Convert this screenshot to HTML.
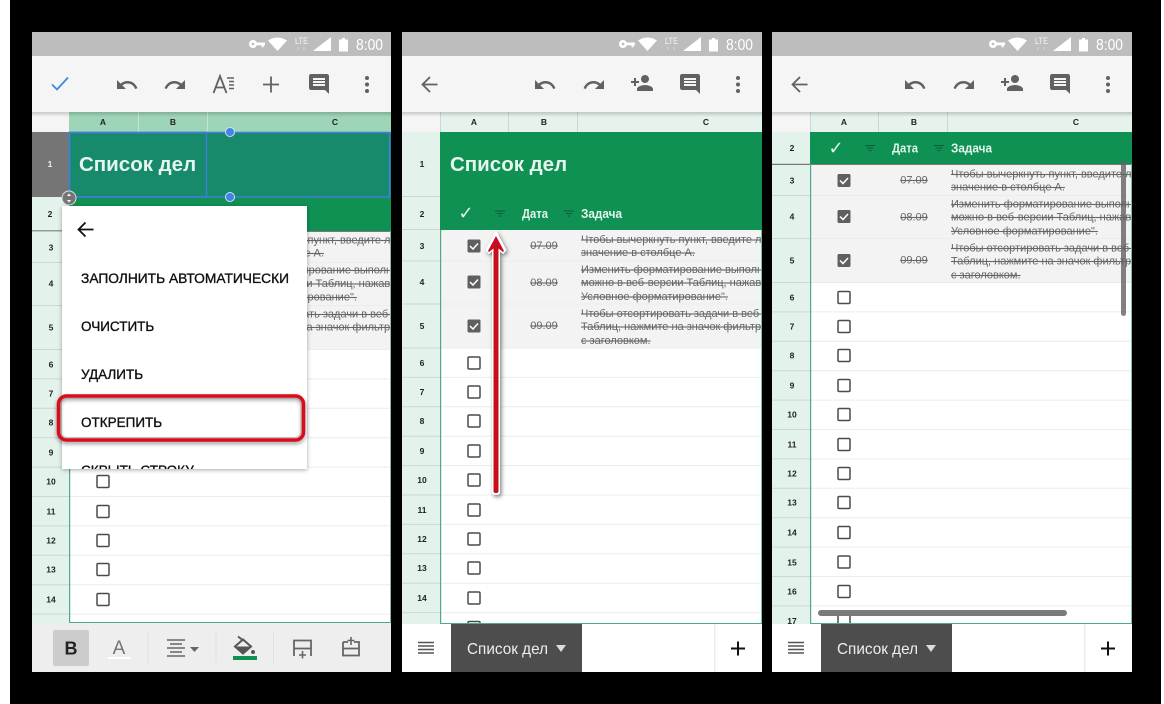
<!DOCTYPE html>
<html lang="ru">
<head>
<meta charset="utf-8">
<title>Список дел</title>
<style>
html,body{margin:0;padding:0;background:#fff;width:1164px;height:704px;overflow:hidden}
svg{display:block;filter:blur(.3px)}
text{font-family:"Liberation Sans","Noto Sans CJK SC",sans-serif}
.n{font-size:8.5px;font-weight:bold;fill:#222;text-anchor:middle}
.c{font-size:8.5px;font-weight:bold;fill:#222;text-anchor:middle}
.t{font-size:11px;fill:#666;text-decoration:line-through}
.d{font-size:11px;fill:#666;text-decoration:line-through;text-anchor:middle}
.h{font-size:12.5px;font-weight:bold;fill:#e4f5ec}
.title{font-size:20.5px;font-weight:bold;fill:#e6f5ee}
.m{font-size:13.5px;fill:#111;stroke:#111;stroke-width:.35}
.time{font-size:15.5px;fill:#fff}
.lte{font-size:9px;fill:#fff;opacity:.85}
.tab{font-size:16px;fill:#eee}
.chk{font-family:"DejaVu Sans",sans-serif;font-size:18px;font-weight:bold;fill:#e6f5ee;text-anchor:middle}
</style>
</head>
<body>
<svg width="1164" height="704" viewBox="0 0 1164 704" xmlns="http://www.w3.org/2000/svg">
<defs>
<clipPath id="pc"><rect x="0" y="32" width="360" height="640"/></clipPath>
<clipPath id="pc1"><rect x="0" y="32" width="359" height="640"/></clipPath>
<clipPath id="menu"><rect x="30" y="206" width="245" height="263"/></clipPath>
<filter id="sh" x="-10%" y="-10%" width="120%" height="120%"><feDropShadow dx="0" dy="1" stdDeviation="2" flood-color="#000" flood-opacity=".35"/></filter>
<filter id="rs" x="-10%" y="-30%" width="120%" height="160%"><feDropShadow dx="0" dy="2" stdDeviation="2" flood-color="#000" flood-opacity=".45"/></filter>
<filter id="as" x="-200%" y="-5%" width="500%" height="110%"><feDropShadow dx="1.500" dy="2" stdDeviation="2" flood-color="#000" flood-opacity=".5"/></filter>
<linearGradient id="tsh" x1="0" y1="0" x2="0" y2="1"><stop offset="0" stop-color="#000" stop-opacity=".18"/><stop offset="1" stop-color="#000" stop-opacity="0"/></linearGradient>
<g id="on"><rect x="-6.500" y="-6.500" width="13" height="13" rx="1.500" fill="#5f5f5f"/><path d="M-4 0l3 3 5-5.500" fill="none" stroke="#fff" stroke-width="1.500"/></g>
<rect id="off" x="-6" y="-6" width="12" height="12" rx="1.200" fill="#fff" stroke="#4a4a4a" stroke-width="1.500"/>
<g id="filt" fill="none" stroke="#0a5c34" stroke-width="1"><path d="M-5-2.500h10M-3.200 0h6.400M-1.300 2.500h2.600"/></g>
<g id="status">
<rect x="0" y="32" width="360" height="24" fill="#bdbdbd"/>
<g fill="#fff">
<circle cx="221" cy="44" r="4"/><circle cx="221" cy="44" r="1.300" fill="#bdbdbd"/><path d="M224 42.500h9v2.800h-1.400v1.900h-2v-1.900h-5.600z"/>
<path d="M236 40.500q9.500-6 19 0l-9.500 10.500z"/>
<path d="M281 51L299 37V51z"/>
<path d="M307 39.500h3v-1.500h3v1.500h3v12h-9z"/>
</g>
<text class="lte" x="263" y="44" textLength="13" lengthAdjust="spacingAndGlyphs">LTE</text>
<path d="M266 47v3M272 47v3" stroke="#fff" stroke-width=".8" opacity=".5"/>
<text class="time" x="324" y="50" textLength="27" lengthAdjust="spacingAndGlyphs">8:00</text>
</g>
<g id="undo"><path fill="#616161" d="M12.500 8c-2.650 0-5.050.99-6.900 2.600L2 7v9h9l-3.620-3.620c1.390-1.160 3.160-1.880 5.120-1.880 3.540 0 6.550 2.310 7.600 5.500l2.370-.78C21.080 11.030 17.150 8 12.500 8z"/></g>
<g id="redo"><path fill="#616161" d="M18.400 10.600C16.550 8.990 14.150 8 11.500 8c-4.650 0-8.580 3.030-9.960 7.220L3.900 16c1.050-3.190 4.050-5.500 7.600-5.500 1.950 0 3.730.72 5.120 1.880L13 16h9V7l-3.600 3.600z"/></g>
<g id="cmt"><path fill="#616161" d="M21.990 4c0-1.100-.89-2-1.990-2H4c-1.100 0-2 .9-2 2v12c0 1.100.9 2 2 2h14l4 4-.01-18zM18 14H6v-2h12v2zm0-3H6V9h12v2zm0-3H6V6h12v2z"/></g>
<g id="dots" fill="#616161"><circle cx="0" cy="-6.500" r="2"/><circle cx="0" cy="0" r="2"/><circle cx="0" cy="6.500" r="2"/></g>
<g id="tools2">
<rect x="0" y="56" width="360" height="56" fill="#f5f5f5"/>
<path d="M35.500 84.500H21M28 77l-7.500 7.500 7.500 7.500" fill="none" stroke="#616161" stroke-width="1.800"/>
<use href="#undo" x="131" y="73"/><use href="#redo" x="180" y="73"/>
<path fill="#616161" transform="translate(228,71)" d="M15 12c2.210 0 4-1.790 4-4s-1.790-4-4-4-4 1.790-4 4 1.790 4 4 4zm-9-2V7H4v3H1v2h3v3h2v-3h3v-2H6zm9 4c-2.670 0-8 1.340-8 4v2h16v-2c0-2.660-5.330-4-8-4z"/>
<use href="#cmt" x="276" y="72"/><use href="#dots" x="336" y="84.500"/>
</g>
<g id="tabbar">
<rect x="0" y="624" width="360" height="48" fill="#fff"/>
<path d="M16 642.500h16M16 646h16M16 649.500h16M16 653h16" stroke="#555" stroke-width="1.500"/>
<rect x="49" y="624" width="131" height="48" fill="#4d4d4d"/>
<text class="tab" x="65" y="654" textLength="81" lengthAdjust="spacingAndGlyphs">Список дел</text>
<path d="M154 645h10l-5 7z" fill="#ddd"/>
<rect x="312" y="624" width="1.500" height="48" fill="#eee"/>
<path d="M336 641.500v14M329 648.500h14" stroke="#111" stroke-width="2"/>
</g>
<g id="grid">
<rect x="0" y="230" width="38" height="480" fill="#e4f2ec"/>
<rect x="38" y="230" width="322" height="480" fill="#fff"/>
<rect x="38" y="230" width="322" height="118" fill="#f3f3f3"/>
<path d="M0 261H360M0 304H360M0 348H360M0 377.400H360M0 406.800H360M0 436.200H360M0 465.600H360M0 495H360M0 524.400H360M0 553.800H360M0 583.200H360M0 612.600H360M0 642H360M0 671.400H360" stroke="#ececec" stroke-width="1"/>
<path d="M0 261H38M0 304H38M0 348H38M0 377.400H38M0 406.800H38M0 436.200H38M0 465.600H38M0 495H38M0 524.400H38M0 553.800H38M0 583.200H38M0 612.600H38M0 642H38M0 671.400H38" stroke="#c9d9d1" stroke-width="1"/>
<use href="#on" x="72" y="246"/><use href="#on" x="72" y="282"/><use href="#on" x="72" y="326"/>
<use href="#off" x="72" y="363"/><use href="#off" x="72" y="392"/><use href="#off" x="72" y="421"/><use href="#off" x="72" y="451"/><use href="#off" x="72" y="480"/><use href="#off" x="72" y="510"/><use href="#off" x="72" y="539"/><use href="#off" x="72" y="568"/><use href="#off" x="72" y="598"/><use href="#off" x="72" y="627.500"/><use href="#off" x="72" y="657"/><use href="#off" x="72" y="686.500"/>
</g>
</defs>

<rect x="10" y="0" width="1151" height="704" fill="#000"/>

<!-- PANEL 1 -->
<g transform="translate(32,0)" clip-path="url(#pc1)">
<g transform="translate(-1,1.500)">
<use href="#grid"/>
<text class="t" x="179" y="242">Чтобы вычеркнуть пункт, введите логическое</text>
<text class="t" x="179" y="255">значение в столбце А.</text>
<text class="t" x="179" y="272">Изменить форматирование выполненных</text>
<text class="t" x="179" y="285.500">можно в веб-версии Таблиц, нажав</text>
<text class="t" x="179" y="299">Условное форматирование".</text>
<text class="t" x="179" y="316">Чтобы отсортировать задачи в веб-версии</text>
<text class="t" x="179" y="329">Таблиц, нажмите на значок фильтра</text>
<text class="t" x="179" y="343">с заголовком.</text>
<text class="n" x="20" y="249">3</text><text class="n" x="20" y="285">4</text><text class="n" x="20" y="329">5</text><text class="n" x="20" y="366">6</text><text class="n" x="20" y="395">7</text><text class="n" x="20" y="424">8</text><text class="n" x="20" y="454">9</text><text class="n" x="20" y="483">10</text><text class="n" x="20" y="513">11</text><text class="n" x="20" y="542">12</text><text class="n" x="20" y="571">13</text><text class="n" x="20" y="601">14</text>
</g>
<rect x="37" y="231" width="1.200" height="392" fill="#4fa98a"/>
<rect x="358" y="231" width="1.200" height="392" fill="#7cc2a8"/>
<rect x="37" y="622" width="322" height="1.200" fill="#4fa98a"/>
<use href="#status"/>
<rect x="0" y="56" width="360" height="56" fill="#f5f5f5"/>
<path d="M20 84.500l5 5 11-12" fill="none" stroke="#4285e0" stroke-width="1.800"/>
<use href="#undo" x="83" y="73"/><use href="#redo" x="131" y="73"/>
<path d="M181.500 93L188 76l6.500 17M184 87.500h8" fill="none" stroke="#616161" stroke-width="1.800"/>
<path d="M195 78h7M197 81.500h5M197 85h5M197 88.500h5" stroke="#616161" stroke-width="1.400"/>
<path d="M231 84.500h16M239 76.500v16" stroke="#616161" stroke-width="1.800"/>
<use href="#cmt" x="275" y="72"/><use href="#dots" x="335" y="84.500"/>
<!-- headers -->
<rect x="0" y="112" width="37" height="20" fill="#f5f5f5"/>
<rect x="37" y="112" width="322" height="20" fill="#9ed5b8"/>
<rect x="106" y="112" width="1" height="20" fill="#c4e5d3"/><rect x="175" y="112" width="1" height="20" fill="#c4e5d3"/>
<text class="c" x="71" y="125">A</text><text class="c" x="141" y="125">B</text><text class="c" x="303" y="125">C</text>
<rect x="0" y="112" width="360" height="5" fill="url(#tsh)"/>
<rect x="0" y="132" width="37" height="65" fill="#757575"/>
<text class="n" x="18" y="167" style="fill:#eee">1</text>
<rect x="0" y="197" width="37" height="34" fill="#e4f2ec"/>
<rect x="0" y="230" width="37" height="1.500" fill="#999"/>
<text class="n" x="18" y="217">2</text>
<rect x="37" y="132" width="322" height="65" fill="#178a6c"/>
<rect x="37" y="197" width="322" height="34" fill="#0f9154"/>
<rect x="37.500" y="132.500" width="320" height="64.500" fill="none" stroke="#3f7fd8" stroke-width="1.500"/>
<rect x="37.500" y="132.500" width="137" height="64.500" fill="none" stroke="#3f7fd8" stroke-width="1.500"/>
<text class="title" x="47" y="171">Список дел</text>
<circle cx="198" cy="132" r="4.500" fill="#4285e0" stroke="#cfe0f5"/>
<circle cx="198" cy="197" r="4.500" fill="#4285e0" stroke="#cfe0f5"/>
<circle cx="37" cy="198" r="7" fill="#757575" stroke="#ddd" stroke-width="1"/>
<path d="M37 193.500l2 2.500h-4zM37 202.500l2-2.500h-4z" fill="#fff"/>
<!-- menu -->
<rect x="30" y="206" width="245" height="263" fill="#fff" filter="url(#sh)"/>
<path d="M61.500 229.500H46.500M53.500 222.500l-7 7 7 7" fill="none" stroke="#111" stroke-width="1.800"/>
<g clip-path="url(#menu)">
<text class="m" x="49" y="283" textLength="208" lengthAdjust="spacingAndGlyphs">ЗАПОЛНИТЬ АВТОМАТИЧЕСКИ</text>
<text class="m" x="49" y="331">ОЧИСТИТЬ</text>
<text class="m" x="49" y="379">УДАЛИТЬ</text>
<text class="m" x="49" y="427">ОТКРЕПИТЬ</text>
<text class="m" x="49" y="475">СКРЫТЬ СТРОКУ</text>
</g>
<rect x="26.500" y="396" width="245" height="44" rx="8" fill="none" stroke="#d8091b" stroke-width="3.500" filter="url(#rs)"/>
<rect x="29" y="398.500" width="240" height="39" rx="6" fill="none" stroke="#999" stroke-width="1" opacity=".6"/>
<!-- bottom bar -->
<rect x="0" y="623" width="359" height="49" fill="#eee"/>
<rect x="21" y="630" width="36" height="36" rx="2" fill="#ccc"/>
<text x="39" y="654.500" text-anchor="middle" style="font-size:18px;font-weight:bold;fill:#222">B</text>
<text x="87" y="654" text-anchor="middle" style="font-size:19px;fill:#757575">A</text>
<rect x="76" y="657" width="23" height="2" fill="#fff"/>
<rect x="115.500" y="632" width="1" height="31" fill="#e0e0e0"/><rect x="183.500" y="632" width="1" height="31" fill="#e0e0e0"/><rect x="241" y="632" width="1" height="31" fill="#e0e0e0"/>
<path d="M135 640h18M138 644h12M135 648h18M138 652h12M135 656h18" stroke="#666" stroke-width="1.600"/>
<path d="M158 647h9l-4.500 5z" fill="#666"/>
<path d="M211 639.500l8 7-8 7-8-7z" fill="none" stroke="#555" stroke-width="2"/>
<path d="M203 646.500h16l-8 7z" fill="#555"/>
<path d="M206 636.500l4 3" stroke="#555" stroke-width="1.800"/>
<circle cx="221" cy="652" r="2" fill="#555"/>
<rect x="201" y="656" width="24" height="4" fill="#0f9154"/>
<path d="M262 656v-15.500h17V656M262 648.500h17" fill="none" stroke="#666" stroke-width="1.800"/>
<path d="M270.500 651v7.500M267 655h7" stroke="#666" stroke-width="1.600"/>
<path d="M311 642v13.500h16V642h-5M316 642h-5M311 648.500h16" fill="none" stroke="#666" stroke-width="1.800"/>
<path d="M319 637v8M315.500 640.500h7" stroke="#666" stroke-width="1.600"/>
</g>

<!-- PANEL 2 -->
<g transform="translate(402,0)" clip-path="url(#pc)">
<use href="#grid"/>
<text class="t" x="179" y="243">Чтобы вычеркнуть пункт, введите логическое</text>
<text class="t" x="179" y="256">значение в столбце А.</text>
<text class="t" x="179" y="273">Изменить форматирование выполненных</text>
<text class="t" x="179" y="286">можно в веб-версии Таблиц, нажав</text>
<text class="t" x="179" y="300">Условное форматирование".</text>
<text class="t" x="179" y="317">Чтобы отсортировать задачи в веб-версии</text>
<text class="t" x="179" y="330">Таблиц, нажмите на значок фильтра</text>
<text class="t" x="179" y="344">с заголовком.</text>
<text class="d" x="142" y="249">07.09</text><text class="d" x="142" y="286">08.09</text><text class="d" x="142" y="329">09.09</text>
<text class="n" x="20" y="249">3</text><text class="n" x="20" y="285">4</text><text class="n" x="20" y="329">5</text><text class="n" x="20" y="366">6</text><text class="n" x="20" y="395">7</text><text class="n" x="20" y="424">8</text><text class="n" x="20" y="454">9</text><text class="n" x="20" y="483">10</text><text class="n" x="20" y="513">11</text><text class="n" x="20" y="542">12</text><text class="n" x="20" y="571">13</text><text class="n" x="20" y="601">14</text>
<rect x="38" y="230" width="1.200" height="394" fill="#4fa98a"/>
<rect x="359" y="230" width="1.200" height="394" fill="#7cc2a8"/>
<rect x="38" y="623" width="322" height="1.200" fill="#4fa98a"/>
<use href="#status"/><use href="#tools2"/>
<rect x="0" y="112" width="360" height="20" fill="#e5f3ec"/>
<rect x="0" y="112" width="38" height="20" fill="#f5f5f5"/>
<rect x="38" y="112" width="1" height="20" fill="#c9d9d1"/><rect x="106" y="112" width="1" height="20" fill="#c9d9d1"/><rect x="175" y="112" width="1" height="20" fill="#c9d9d1"/>
<text class="c" x="72" y="125">A</text><text class="c" x="142" y="125">B</text><text class="c" x="304" y="125">C</text>
<rect x="0" y="112" width="360" height="5" fill="url(#tsh)"/>
<rect x="0" y="132" width="38" height="98" fill="#e4f2ec"/>
<rect x="0" y="196" width="38" height="1" fill="#c9d9d1"/>
<rect x="0" y="229" width="38" height="1" fill="#c9d9d1"/>
<text class="n" x="20" y="167">1</text><text class="n" x="20" y="217">2</text>
<rect x="38" y="132" width="322" height="98" fill="#0f9154"/>
<text class="title" x="48" y="171">Список дел</text>
<text class="chk" x="64" y="219">✓</text>
<use href="#filt" x="98" y="213.500"/>
<text class="h" x="120" y="218" textLength="26" lengthAdjust="spacingAndGlyphs">Дата</text>
<use href="#filt" x="167" y="213.500"/>
<text class="h" x="179" y="218" textLength="41" lengthAdjust="spacingAndGlyphs">Задача</text>
<use href="#tabbar"/>
<!-- arrow -->
<g filter="url(#as)">
<path d="M94 232l-9.500 18 2.500 3 7-5.500 7 5.500 2.500-3z" fill="#fff" stroke="#fff" stroke-width="1.500"/>
<rect x="90" y="246" width="8" height="249" rx="3" fill="#fff"/>
<path d="M94 236l-8 15 1 1 7-5.500 7 5.500 1-1z" fill="#c8081a"/>
<rect x="91.500" y="243" width="5" height="250" rx="2" fill="#c8081a"/>
</g>
</g>

<!-- PANEL 3 -->
<g transform="translate(772,0)" clip-path="url(#pc)">
<g transform="translate(0,-65.500)">
<use href="#grid"/>
<text class="t" x="179" y="243">Чтобы вычеркнуть пункт, введите логическое</text>
<text class="t" x="179" y="256">значение в столбце А.</text>
<text class="t" x="179" y="273">Изменить форматирование выполненных</text>
<text class="t" x="179" y="286">можно в веб-версии Таблиц, нажав</text>
<text class="t" x="179" y="300">Условное форматирование".</text>
<text class="t" x="179" y="317">Чтобы отсортировать задачи в веб-версии</text>
<text class="t" x="179" y="330">Таблиц, нажмите на значок фильтра</text>
<text class="t" x="179" y="344">с заголовком.</text>
<text class="d" x="142" y="249">07.09</text><text class="d" x="142" y="286">08.09</text><text class="d" x="142" y="329">09.09</text>
<text class="n" x="20" y="249">3</text><text class="n" x="20" y="285">4</text><text class="n" x="20" y="329">5</text><text class="n" x="20" y="366">6</text><text class="n" x="20" y="395">7</text><text class="n" x="20" y="424">8</text><text class="n" x="20" y="454">9</text><text class="n" x="20" y="483">10</text><text class="n" x="20" y="513">11</text><text class="n" x="20" y="542">12</text><text class="n" x="20" y="571">13</text><text class="n" x="20" y="601">14</text><text class="n" x="20" y="631">15</text><text class="n" x="20" y="660">16</text><text class="n" x="20" y="689.500">17</text>
</g>
<rect x="38" y="164" width="1.200" height="460" fill="#4fa98a"/>
<rect x="359" y="164" width="1.200" height="460" fill="#7cc2a8"/>
<rect x="38" y="623" width="322" height="1.200" fill="#4fa98a"/>
<use href="#status"/><use href="#tools2"/>
<rect x="0" y="112" width="360" height="20" fill="#e5f3ec"/>
<rect x="0" y="112" width="38" height="20" fill="#f5f5f5"/>
<rect x="38" y="112" width="1" height="20" fill="#c9d9d1"/><rect x="106" y="112" width="1" height="20" fill="#c9d9d1"/><rect x="175" y="112" width="1" height="20" fill="#c9d9d1"/>
<text class="c" x="72" y="125">A</text><text class="c" x="142" y="125">B</text><text class="c" x="304" y="125">C</text>
<rect x="0" y="112" width="360" height="5" fill="url(#tsh)"/>
<rect x="0" y="132" width="38" height="32" fill="#e4f2ec"/>
<rect x="0" y="163" width="38" height="1" fill="#c9d9d1"/>
<text class="n" x="20" y="151">2</text>
<rect x="38" y="132" width="322" height="32" fill="#0f9154"/>
<text class="chk" x="64" y="154">✓</text>
<use href="#filt" x="98" y="148"/>
<text class="h" x="120" y="152.500" textLength="26" lengthAdjust="spacingAndGlyphs">Дата</text>
<use href="#filt" x="167" y="148"/>
<text class="h" x="179" y="152.500" textLength="41" lengthAdjust="spacingAndGlyphs">Задача</text>
<rect x="349" y="161" width="5" height="155" rx="2.500" fill="#616161" opacity=".8"/>
<rect x="46" y="610" width="249" height="6" rx="3" fill="#7a7a7a"/>
<use href="#tabbar"/>
</g>
</svg>
</body>
</html>
